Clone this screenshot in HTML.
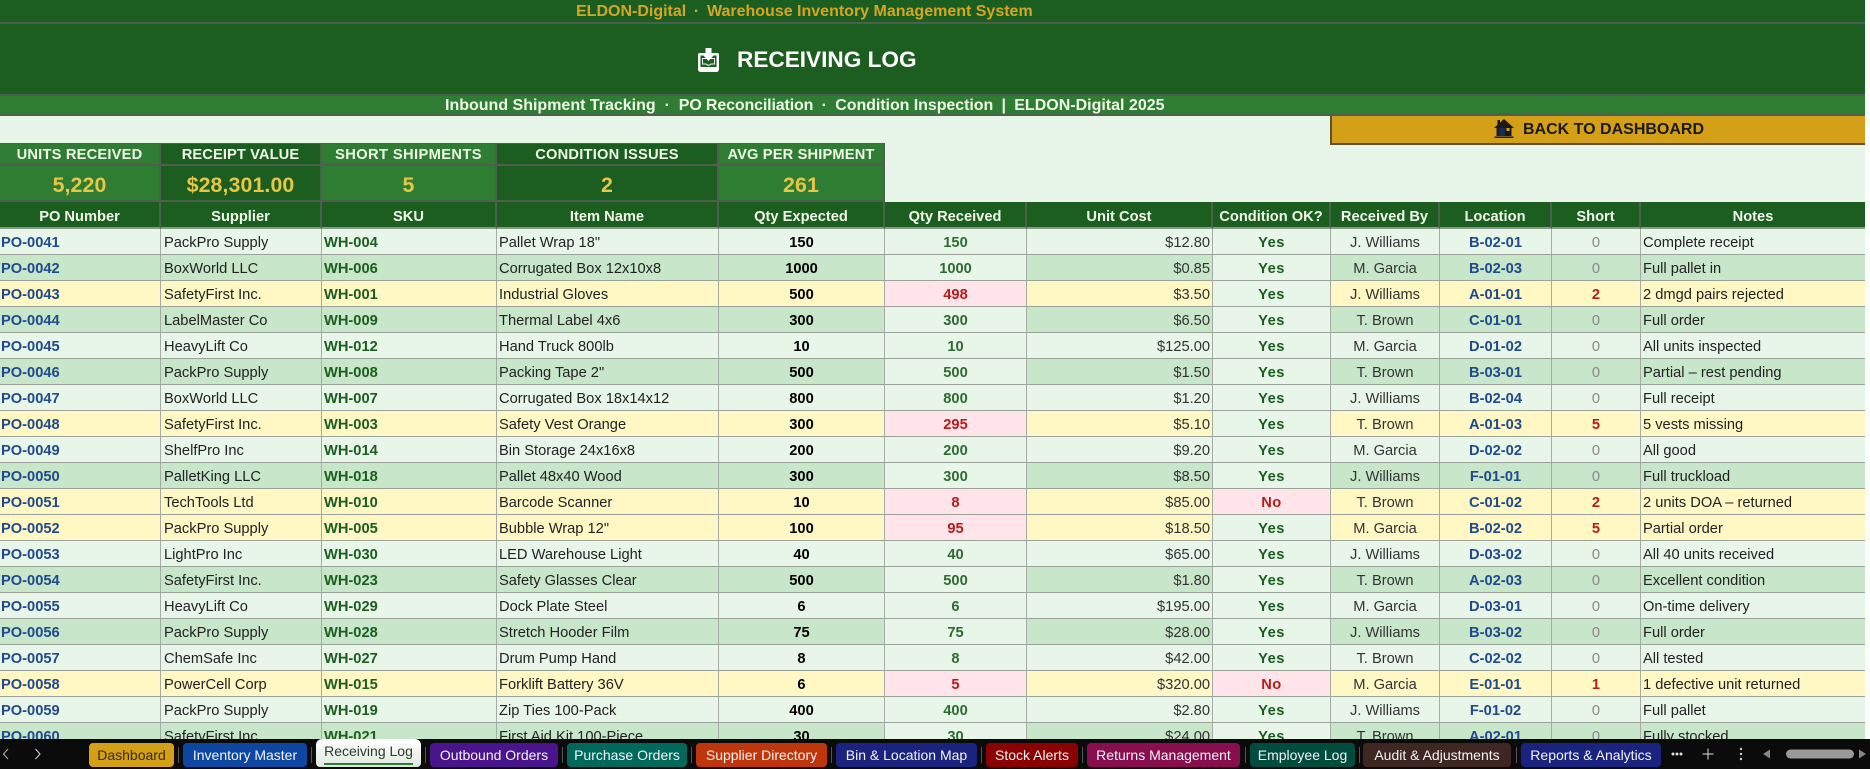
<!DOCTYPE html>
<html><head><meta charset="utf-8"><title>Receiving Log</title>
<style>
html,body{margin:0;padding:0;width:1870px;height:769px;overflow:hidden;background:#fbfdfb;font-family:"Liberation Sans",Arial,sans-serif}
.a{position:absolute;box-sizing:border-box;white-space:nowrap}
i{font-style:normal}
#bg{left:0;top:116px;width:1865px;height:623px;background:#e8f5e9}
.bar{left:0;width:1865px;text-align:center;font-weight:bold}
#t1{top:0;height:24px;line-height:24px;background:#1b5e20;border-bottom:2px solid #4f5f4f;color:#d4a628;font-size:16px}
#t1 span{position:absolute;left:576px}
#t2{top:24px;height:72px;background:#1b5e20;border-bottom:2px solid #4f5f4f}
#t2 b{position:absolute;left:737px;top:22px;line-height:28px;font-size:22.6px;color:#fff}
#t3{top:96px;height:20px;line-height:20px;background:#2e7d32;border-bottom:2px solid #4f5f4f;color:#f1f8e9;font-size:16px}
#t3 span{position:absolute;left:445px}
#back{left:1330px;top:116px;width:535px;height:29px;background:#d4a017;border-left:2px solid #5c5030;border-bottom:2px solid #5c5030;color:#1a1a1a;font-weight:bold;font-size:16px;line-height:27px}
#back span{position:absolute;left:191px;top:0}
.k{height:21px;line-height:23px;top:143px;border:solid #4f5f4f;border-width:1px 2px 0 0;text-align:center;color:#f1f8e9;font-weight:bold;font-size:14.67px}
.v{height:38px;line-height:38px;top:164px;border:solid #4f5f4f;border-width:2px 2px 2px 0;text-align:center;color:#e6c547;font-weight:bold;font-size:21.33px;letter-spacing:.1px}
.L{background:#2e7d32}.D{background:#1b5e20}
.h{top:202px;height:27px;line-height:30px;background:#1b5e20;border-right:2px solid #4f5f4f;border-bottom:2px solid #8a9a8a;text-align:center;color:#f1f8e9;font-weight:bold;font-size:14.67px}
table{position:absolute;left:0;top:229px;border-collapse:separate;border-spacing:0;table-layout:fixed;width:1865px;font-size:14.67px;color:#222}
td{box-sizing:border-box;height:26px;padding:4px 2px 0;border-right:1px solid #a4aca4;border-bottom:1px solid #9aa29a;white-space:nowrap;overflow:hidden;line-height:21px}
td:last-child{border-right:0}
tr.l td{background:#e8f5e9}tr.g td{background:#c8e6c9}tr.y td{background:#fff7c4}
td:nth-child(1){font-weight:bold;color:#1f4a8c;padding-left:1px}
td:nth-child(2){padding-left:3px}
td:nth-child(3){font-weight:bold;color:#1b5e20}
td:nth-child(5){font-weight:bold;color:#000;text-align:center}
tr td:nth-child(6){font-weight:bold;color:#2e6b32;text-align:center;background:#e8f5e9}
td:nth-child(7){text-align:right;color:#333}
tr td:nth-child(8){font-weight:bold;color:#1b5e20;text-align:center;background:#e8f5e9;letter-spacing:.5px}
td:nth-child(9){text-align:center;color:#333}
td:nth-child(10){font-weight:bold;color:#1f4a8c;text-align:center}
td:nth-child(11){text-align:center;color:#888}
tr td.p{background:#ffe4e9;color:#b71c1c}
tr td.r{font-weight:bold;color:#b71c1c}
#tabs{left:0;top:739px;width:1870px;height:30px;background:#0b0b0b}
.t{top:4px;height:24px;line-height:24px;border-radius:4px;text-align:center;color:#f3f3f3;font-size:14px}
.s{top:8px;width:1px;height:16px;background:#555}
</style></head><body>
<div class="a" id="bg"></div>
<div class="a bar" id="t1"><span>ELDON-Digital <i style="margin:0 -1.2px">&nbsp;·&nbsp;</i> Warehouse Inventory Management System</span></div>
<div class="a bar" id="t2">
<svg style="position:absolute;left:697px;top:24px" width="23" height="24" viewBox="0 0 23 24"><path d="M1 7Q1 5 3 5H20Q22 5 22 7V21Q22 24 19 24H4Q1 24 1 21Z" fill="#fff"/><path d="M3.500 7.500H19.500V19H3.500Z" fill="#1b5e20"/><path d="M5.500 10.500H17.500V16H14Q11.500 18.500 9 16H5.500Z" fill="none" stroke="#fff" stroke-width=".9"/><path d="M8.500 0H14.500V6H18L11.500 13L5 6H8.500Z" fill="#fff"/></svg>
<b>RECEIVING LOG</b></div>
<div class="a bar" id="t3"><span>Inbound Shipment Tracking &nbsp;·&nbsp; <i style="letter-spacing:-.14px">PO Reconciliation</i> <i style="margin:0 -.6px">&nbsp;·&nbsp;</i> <i style="letter-spacing:-.06px">Condition Inspection</i> <i style="margin:0 -.6px">&nbsp;|&nbsp;</i> ELDON-Digital 2025</span></div>
<div class="a" id="back">
<svg style="position:absolute;left:162px;top:3px" width="20" height="19" viewBox="0 0 20 19"><path d="M10 0L20 9H17.500V17H2.500V9H0L3.500 5.800V1H6V3.600Z" fill="#1a1a1a"/><rect x="5" y="9" width="6" height="8" fill="#1b2a4a"/><rect x="12.500" y="9" width="3" height="3" fill="#d4a017"/><rect x="0.500" y="17.500" width="19" height="1.500" fill="#1a1a1a"/></svg>
<span>BACK TO DASHBOARD</span></div>

<div class="a k L" style="left:0;width:161px;letter-spacing:.2px">UNITS RECEIVED</div>
<div class="a k D" style="left:161px;width:161px;letter-spacing:.1px">RECEIPT VALUE</div>
<div class="a k L" style="left:322px;width:175px;letter-spacing:.4px">SHORT SHIPMENTS</div>
<div class="a k D" style="left:497px;width:222px;letter-spacing:.22px">CONDITION ISSUES</div>
<div class="a k L" style="left:719px;width:166px;letter-spacing:.15px">AVG PER SHIPMENT</div>
<div class="a v L" style="left:0;width:161px">5,220</div>
<div class="a v D" style="left:161px;width:161px">$28,301.00</div>
<div class="a v L" style="left:322px;width:175px">5</div>
<div class="a v D" style="left:497px;width:222px">2</div>
<div class="a v L" style="left:719px;width:166px">261</div>

<div class="a h" style="left:0;width:161px">PO Number</div>
<div class="a h" style="left:161px;width:161px">Supplier</div>
<div class="a h" style="left:322px;width:175px">SKU</div>
<div class="a h" style="left:497px;width:222px">Item Name</div>
<div class="a h" style="left:719px;width:166px">Qty Expected</div>
<div class="a h" style="left:885px;width:142px">Qty Received</div>
<div class="a h" style="left:1027px;width:186px">Unit Cost</div>
<div class="a h" style="left:1213px;width:118px">Condition OK?</div>
<div class="a h" style="left:1331px;width:109px">Received By</div>
<div class="a h" style="left:1440px;width:112px">Location</div>
<div class="a h" style="left:1552px;width:89px">Short</div>
<div class="a h" style="left:1641px;width:224px;border-right:0">Notes</div>

<table><colgroup><col style="width:161px"><col style="width:161px"><col style="width:175px"><col style="width:222px"><col style="width:166px"><col style="width:142px"><col style="width:186px"><col style="width:118px"><col style="width:109px"><col style="width:112px"><col style="width:89px"><col style="width:224px"></colgroup>
<tr class="l"><td>PO-0041</td><td>PackPro Supply</td><td>WH-004</td><td>Pallet Wrap 18"</td><td>150</td><td>150</td><td>$12.80</td><td>Yes</td><td>J. Williams</td><td>B-02-01</td><td>0</td><td>Complete receipt</td></tr>
<tr class="g"><td>PO-0042</td><td>BoxWorld LLC</td><td>WH-006</td><td>Corrugated Box 12x10x8</td><td>1000</td><td>1000</td><td>$0.85</td><td>Yes</td><td>M. Garcia</td><td>B-02-03</td><td>0</td><td>Full pallet in</td></tr>
<tr class="y"><td>PO-0043</td><td>SafetyFirst Inc.</td><td>WH-001</td><td>Industrial Gloves</td><td>500</td><td class="p">498</td><td>$3.50</td><td>Yes</td><td>J. Williams</td><td>A-01-01</td><td class="r">2</td><td>2 dmgd pairs rejected</td></tr>
<tr class="g"><td>PO-0044</td><td>LabelMaster Co</td><td>WH-009</td><td>Thermal Label 4x6</td><td>300</td><td>300</td><td>$6.50</td><td>Yes</td><td>T. Brown</td><td>C-01-01</td><td>0</td><td>Full order</td></tr>
<tr class="l"><td>PO-0045</td><td>HeavyLift Co</td><td>WH-012</td><td>Hand Truck 800lb</td><td>10</td><td>10</td><td>$125.00</td><td>Yes</td><td>M. Garcia</td><td>D-01-02</td><td>0</td><td>All units inspected</td></tr>
<tr class="g"><td>PO-0046</td><td>PackPro Supply</td><td>WH-008</td><td>Packing Tape 2"</td><td>500</td><td>500</td><td>$1.50</td><td>Yes</td><td>T. Brown</td><td>B-03-01</td><td>0</td><td>Partial – rest pending</td></tr>
<tr class="l"><td>PO-0047</td><td>BoxWorld LLC</td><td>WH-007</td><td>Corrugated Box 18x14x12</td><td>800</td><td>800</td><td>$1.20</td><td>Yes</td><td>J. Williams</td><td>B-02-04</td><td>0</td><td>Full receipt</td></tr>
<tr class="y"><td>PO-0048</td><td>SafetyFirst Inc.</td><td>WH-003</td><td>Safety Vest Orange</td><td>300</td><td class="p">295</td><td>$5.10</td><td>Yes</td><td>T. Brown</td><td>A-01-03</td><td class="r">5</td><td>5 vests missing</td></tr>
<tr class="l"><td>PO-0049</td><td>ShelfPro Inc</td><td>WH-014</td><td>Bin Storage 24x16x8</td><td>200</td><td>200</td><td>$9.20</td><td>Yes</td><td>M. Garcia</td><td>D-02-02</td><td>0</td><td>All good</td></tr>
<tr class="g"><td>PO-0050</td><td>PalletKing LLC</td><td>WH-018</td><td>Pallet 48x40 Wood</td><td>300</td><td>300</td><td>$8.50</td><td>Yes</td><td>J. Williams</td><td>F-01-01</td><td>0</td><td>Full truckload</td></tr>
<tr class="y"><td>PO-0051</td><td>TechTools Ltd</td><td>WH-010</td><td>Barcode Scanner</td><td>10</td><td class="p">8</td><td>$85.00</td><td class="p">No</td><td>T. Brown</td><td>C-01-02</td><td class="r">2</td><td>2 units DOA – returned</td></tr>
<tr class="y"><td>PO-0052</td><td>PackPro Supply</td><td>WH-005</td><td>Bubble Wrap 12"</td><td>100</td><td class="p">95</td><td>$18.50</td><td>Yes</td><td>M. Garcia</td><td>B-02-02</td><td class="r">5</td><td>Partial order</td></tr>
<tr class="l"><td>PO-0053</td><td>LightPro Inc</td><td>WH-030</td><td>LED Warehouse Light</td><td>40</td><td>40</td><td>$65.00</td><td>Yes</td><td>J. Williams</td><td>D-03-02</td><td>0</td><td>All 40 units received</td></tr>
<tr class="g"><td>PO-0054</td><td>SafetyFirst Inc.</td><td>WH-023</td><td>Safety Glasses Clear</td><td>500</td><td>500</td><td>$1.80</td><td>Yes</td><td>T. Brown</td><td>A-02-03</td><td>0</td><td>Excellent condition</td></tr>
<tr class="l"><td>PO-0055</td><td>HeavyLift Co</td><td>WH-029</td><td>Dock Plate Steel</td><td>6</td><td>6</td><td>$195.00</td><td>Yes</td><td>M. Garcia</td><td>D-03-01</td><td>0</td><td>On-time delivery</td></tr>
<tr class="g"><td>PO-0056</td><td>PackPro Supply</td><td>WH-028</td><td>Stretch Hooder Film</td><td>75</td><td>75</td><td>$28.00</td><td>Yes</td><td>J. Williams</td><td>B-03-02</td><td>0</td><td>Full order</td></tr>
<tr class="l"><td>PO-0057</td><td>ChemSafe Inc</td><td>WH-027</td><td>Drum Pump Hand</td><td>8</td><td>8</td><td>$42.00</td><td>Yes</td><td>T. Brown</td><td>C-02-02</td><td>0</td><td>All tested</td></tr>
<tr class="y"><td>PO-0058</td><td>PowerCell Corp</td><td>WH-015</td><td>Forklift Battery 36V</td><td>6</td><td class="p">5</td><td>$320.00</td><td class="p">No</td><td>M. Garcia</td><td>E-01-01</td><td class="r">1</td><td>1 defective unit returned</td></tr>
<tr class="l"><td>PO-0059</td><td>PackPro Supply</td><td>WH-019</td><td>Zip Ties 100-Pack</td><td>400</td><td>400</td><td>$2.80</td><td>Yes</td><td>J. Williams</td><td>F-01-02</td><td>0</td><td>Full pallet</td></tr>
<tr class="g"><td>PO-0060</td><td>SafetyFirst Inc.</td><td>WH-021</td><td>First Aid Kit 100-Piece</td><td>30</td><td>30</td><td>$24.00</td><td>Yes</td><td>T. Brown</td><td>A-02-01</td><td>0</td><td>Fully stocked</td></tr>
</table>

<div class="a" id="tabs">
<svg class="a" style="left:0;top:0" width="44" height="30" viewBox="0 0 44 30"><path d="M8 10L3.500 15L8 20" fill="none" stroke="#aaa" stroke-width="1.100"/><path d="M35.500 10L40 15L35.500 20" fill="none" stroke="#ccc" stroke-width="1.100"/></svg>
<div class="a t" style="left:89px;width:85px;background:#d4a017;color:#3a2c08">Dashboard</div>
<div class="a s" style="left:178px"></div>
<div class="a t" style="left:183px;width:124px;background:#0d47a1">Inventory Master</div>
<div class="a s" style="left:311px"></div>
<div class="a t" style="left:316px;top:0;width:105px;height:28px;line-height:25px;border-radius:6px 6px 4px 4px;background:linear-gradient(#fff,#dfe8df);color:#2a3a2a">Receiving Log<div class="a" style="left:8px;top:24px;width:89px;height:2px;background:#2e7d32"></div></div>
<div class="a s" style="left:425px"></div>
<div class="a t" style="left:430px;width:128px;background:#4a148c">Outbound Orders</div>
<div class="a s" style="left:562px"></div>
<div class="a t" style="left:567px;width:120px;background:#00695c">Purchase Orders</div>
<div class="a s" style="left:691px"></div>
<div class="a t" style="left:696px;width:131px;background:#bf360c">Supplier Directory</div>
<div class="a s" style="left:831px"></div>
<div class="a t" style="left:836px;width:141px;background:#1a237e">Bin &amp; Location Map</div>
<div class="a s" style="left:981px"></div>
<div class="a t" style="left:986px;width:92px;background:#8b0000">Stock Alerts</div>
<div class="a s" style="left:1082px"></div>
<div class="a t" style="left:1087px;width:153px;background:#880e4f">Returns Management</div>
<div class="a s" style="left:1245px"></div>
<div class="a t" style="left:1250px;width:105px;background:#004d40">Employee Log</div>
<div class="a s" style="left:1359px"></div>
<div class="a t" style="left:1363px;width:148px;background:#3e2723">Audit &amp; Adjustments</div>
<div class="a s" style="left:1516px"></div>
<div class="a t" style="left:1521px;width:140px;background:#1a237e">Reports &amp; Analytics</div>
<svg class="a" style="left:1670px;top:0" width="200" height="30" viewBox="0 0 200 30">
<circle cx="3" cy="15" r="1.500" fill="#ddd"/><circle cx="7" cy="15" r="1.500" fill="#ddd"/><circle cx="11" cy="15" r="1.500" fill="#ddd"/>
<path d="M38 9.500V20.500M32.500 15H43.500" stroke="#ddd" stroke-width="1" fill="none"/>
<circle cx="71" cy="10" r="1.200" fill="#ccc"/><circle cx="71" cy="15" r="1.200" fill="#ccc"/><circle cx="71" cy="20" r="1.200" fill="#ccc"/>
<path d="M100 10.500V19.500L93 15Z" fill="#888"/>
<rect x="116" y="10.500" width="68" height="9" rx="4.500" fill="#9a9a9a"/>
<path d="M189 10.500V19.500L196 15Z" fill="#888"/>
</svg>
</div>
</body></html>
